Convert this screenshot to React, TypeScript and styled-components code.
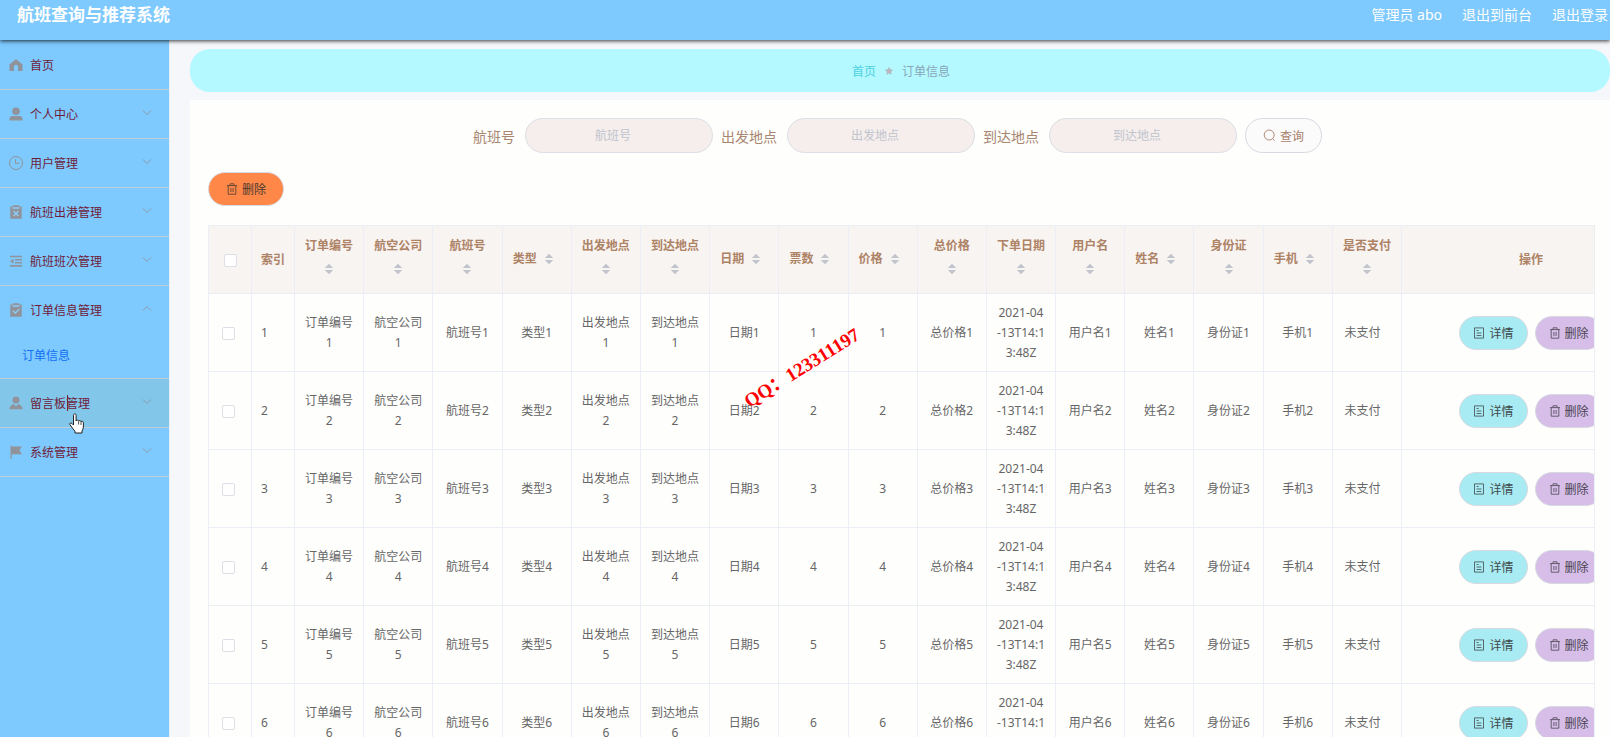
import React from "react";
import styled, { createGlobalStyle, css } from "styled-components";

const GlobalStyle = createGlobalStyle`
  * { box-sizing: border-box; }
  body {
    margin: 0;
    background: #f5f7fa;
    font-family: "Noto Sans", "Noto Sans CJK SC", sans-serif;
    font-size: 12px;
    color: #666;
  }
  button, input { font-family: inherit; }
  a { color: inherit; text-decoration: none; }
`;

const Shell = styled.div`
  position: relative;
  display: flex;
  flex-direction: column;
  height: 100vh;
  overflow: hidden;
`;

const TopBar = styled.header`
  position: relative;
  z-index: 2;
  flex: none;
  display: flex;
  align-items: center;
  justify-content: space-between;
  height: 40px;
  padding: 0 2px 11px 17px;
  background: #7ec9fd;
  color: #fff;
  box-shadow: 0 1px 4px rgba(0, 0, 0, 0.8);
`;

const Title = styled.h1`
  margin: 0;
  font-size: 17px;
  line-height: 28px;
  font-weight: 700;
`;

const TopLinks = styled.nav`
  display: flex;
  gap: 20px;
  font-size: 14px;
  line-height: 28px;
`;

const Body = styled.div`
  flex: 1;
  display: flex;
  min-height: 0;
`;

const Sidebar = styled.aside`
  flex: none;
  width: 170px;
  background: #7ec9fd;
  border-right: 1px solid #e6eef5;
`;

const Menu = styled.ul`
  margin: 0;
  padding: 1px 0 0;
  list-style: none;
`;

const MenuGroup = styled.li<{ $hover?: boolean }>`
  border-bottom: 1px solid #c0cdd6;
  background: ${(p) => (p.$hover ? "#82c7ea" : "transparent")};
`;

const MenuLink = styled.a`
  display: flex;
  align-items: center;
  height: 48px;
  padding: 0 17px 0 8px;
  color: #6e1c3a;
`;

const MenuText = styled.span`
  flex: 1;
  padding-left: 6px;
`;

const SubLink = styled.a`
  display: block;
  height: 44px;
  padding-left: 22px;
  line-height: 44px;
  color: #1270f5;
`;

const Main = styled.main`
  flex: 1;
  min-width: 0;
  padding: 9px 0 0 20px;
`;

const Breadcrumb = styled.nav`
  display: flex;
  align-items: center;
  justify-content: center;
  gap: 9px;
  height: 43px;
  padding-left: 2px;
  border-radius: 20px;
  background: #b3f9ff;
  color: #8aa5b8;
`;

const HomeLink = styled.a`
  color: #4cd0e0;
`;

const Panel = styled.section`
  margin-top: 8px;
  padding: 18px 15px 0 18px;
  background: #fefefd;
`;

const SearchForm = styled.form`
  display: flex;
  justify-content: center;
  gap: 8px;
  padding-right: 8px;
`;

const Field = styled.label`
  display: flex;
  align-items: center;
  gap: 10px;
  font-size: 14px;
  color: #a8866f;
`;

const TextBox = styled.input`
  width: 188px;
  height: 35px;
  padding: 0 27px 0 15px;
  border: 1px solid #dcdfe6;
  border-radius: 18px;
  background: #f5eeec;
  font-size: 12px;
  text-align: center;
  outline: none;
  &::placeholder { color: #c0c4cc; }
`;

type Tone = "plain" | "orange" | "cyan" | "purple";
const tones = {
  plain: css`background: #fcfbfb; color: #a8806a; padding: 0 17px;`,
  orange: css`background: #ff8849; color: #4a3a30; padding: 0 17px;`,
  cyan: css`background: #a8ebf2; color: #3f4a4d; padding: 0 13px;`,
  purple: css`background: #d6bee8; color: #4a4450; padding: 0 13px;`,
};

const PillButton = styled.button<{ $tone: Tone }>`
  display: inline-flex;
  align-items: center;
  gap: 4px;
  height: ${(p) => (p.$tone === "plain" ? 35 : 34)}px;
  border: 1px solid #d8dae2;
  border-radius: 18px;
  font-size: 12px;
  white-space: nowrap;
  cursor: pointer;
  ${(p) => tones[p.$tone]}
`;

const Toolbar = styled.div`
  padding: 19px 0;
`;

const TableFrame = styled.div`
  overflow: hidden;
  border: 1px solid #ebeef5;
  border-bottom: 0;
`;

const Table = styled.table`
  width: 100%;
  min-width: 1452px;
  table-layout: fixed;
  border-collapse: separate;
  border-spacing: 0;
`;

const Col = styled.col<{ $w?: number }>`
  ${(p) => p.$w && `width: ${p.$w}px;`}
`;

const cell = css`
  border-right: 1px solid #ebeef5;
  border-bottom: 1px solid #ebeef5;
  padding: 0 9px;
  line-height: 20px;
`;

const HeadCell = styled.th<{ $left?: boolean }>`
  ${cell}
  height: 68px;
  background: #f8f4f2;
  color: #ad8265;
  font-weight: 700;
  text-align: ${(p) => (p.$left ? "left" : "center")};
`;

const SortLabel = styled.div`
  display: flex;
  flex-wrap: wrap;
  align-items: center;
  justify-content: center;
  padding-bottom: 1px;
`;

const CaretBox = styled.span`
  display: flex;
  align-items: center;
  justify-content: center;
  width: 24px;
  height: 26px;
`;

const DataCell = styled.td<{ $left?: boolean }>`
  ${cell}
  height: 78px;
  text-align: ${(p) => (p.$left ? "left" : "center")};
  word-break: break-all;
  white-space: pre-line;
`;

const PaidText = styled.span`
  padding-right: 9px;
`;

const Check = styled.input`
  appearance: none;
  display: inline-block;
  width: 13px;
  height: 13px;
  margin: 0;
  border: 1px solid #dcdfe6;
  border-radius: 2px;
  background: #fff;
  vertical-align: middle;
  td & { margin-right: 4px; }
`;

const Actions = styled.div`
  display: flex;
  justify-content: center;
  gap: 7px;
`;

const Watermark = styled.div`
  position: absolute;
  z-index: 3;
  left: 736px;
  top: 356px;
  font-family: "Liberation Serif", "Noto Sans CJK SC", serif;
  font-size: 19px;
  line-height: 24px;
  font-weight: 700;
  color: #f00;
  white-space: nowrap;
  transform: rotate(-32deg);
  pointer-events: none;
`;

const Pointer = styled.svg`
  position: absolute;
  z-index: 3;
  left: 69px;
  top: 413px;
`;

const TextCaret = styled.i`
  position: absolute;
  z-index: 3;
  left: 67px;
  top: 395px;
  width: 1px;
  height: 16px;
  background: #7a2030;
`;

const iconPaths: Record<string, React.ReactNode> = {
  home: <path fill="#909399" d="M8 2 1.5 7.4V14h4.4v-4.2a2.1 2.1 0 0 1 4.2 0V14h4.4V7.4z" />,
  user: (
    <g fill="#909399">
      <circle cx="8" cy="5.2" r="3.8" />
      <path d="M1.5 14.5v-1.6c0-2 1.4-3 3-3h7c1.6 0 3 1 3 3v1.6z" />
    </g>
  ),
  clock: (
    <g fill="none" stroke="#909399" strokeWidth="1">
      <circle cx="8" cy="8" r="6.5" />
      <path d="M7.5 4.300v4h4" />
    </g>
  ),
  clipX: (
    <g>
      <path fill="#909399" d="M2.300 2.500h2.500V1.300h6.400v1.200h2.500v12.200H2.300z" />
      <path stroke="#8fd0fb" strokeWidth="1.3" fill="none" d="M4.500 4h7M5.500 7l5 5m0-5-5 5" />
    </g>
  ),
  list: (
    <g>
      <path stroke="#909399" fill="none" strokeWidth="1.6" d="M2 3.500h12M7 6.700h7M7 9.700h7M2 12.900h12" />
      <path fill="#909399" d="M5.500 5.700v5L2 8.200z" />
    </g>
  ),
  clipOk: (
    <g>
      <path fill="#909399" d="M2.300 2.500h2.500V1.300h6.400v1.200h2.500v12.200H2.300z" />
      <path stroke="#8fd0fb" strokeWidth="1.3" fill="none" d="M4.500 4h7M5 8.800l2.300 2.300 3.900-4" />
    </g>
  ),
  person: (
    <g fill="#909399">
      <circle cx="8" cy="5" r="3.5" />
      <path d="M1.5 14.300c0-2.800 1.700-4.500 4.200-5L8 11.200l2.300-1.900c2.500.5 4.200 2.200 4.200 5z" />
    </g>
  ),
  flag: <path fill="#909399" d="M2.500 1.500h1.200v1h10.300l-2.600 3.800 2.600 3.900H3.700v4.500H2.500z" />,
};

const MenuIcon = ({ name }: { name: string }) => (
  <svg width="16" height="16" viewBox="0 0 16 16" aria-hidden="true">{iconPaths[name]}</svg>
);

const Chevron = ({ up }: { up?: boolean }) => (
  <svg width="10" height="14" viewBox="0 0 10 14" aria-hidden="true">
    <path d={up ? "M1 7.500 5 3.500l4 4" : "M1 3.500l4 4 4-4"} fill="none" stroke="#909399" strokeWidth="0.9" />
  </svg>
);

const TrashIcon = () => (
  <svg width="12" height="12" viewBox="0 0 12 12" fill="none" stroke="currentColor" strokeWidth="0.8" aria-hidden="true">
    <path d="M1 2.600h10M4 2.400V.8h4v1.600M2.200 2.800v8.400h7.600V2.800M4.900 5v4M7.100 5v4" />
  </svg>
);

const DocIcon = () => (
  <svg width="12" height="12" viewBox="0 0 12 12" fill="none" stroke="currentColor" strokeWidth="0.8" aria-hidden="true">
    <path d="M1.500.9h9v10.200h-9zM3.600 3.500h2M3.600 6h4.800M3.600 8.500h4.800" />
  </svg>
);

const SearchIcon = () => (
  <svg width="13" height="13" viewBox="0 0 13 13" fill="none" stroke="currentColor" strokeWidth="0.9" aria-hidden="true">
    <circle cx="6.2" cy="6" r="5" />
    <path d="m9.600 9.600 2 2" />
  </svg>
);

const StarIcon = () => (
  <svg width="8" height="8" viewBox="0 0 10 10" aria-hidden="true">
    <path fill="#c0b4bc" stroke="#a9a9b4" strokeWidth="0.6" d="m5 .5 1.300 3 3.200.3-2.400 2.100.7 3.200L5 7.400 2.200 9.100l.7-3.200L.5 3.800l3.200-.3z" />
  </svg>
);

const SortCaret = () => (
  <CaretBox>
    <svg width="10" height="12" viewBox="0 0 10 12" fill="#c0c4cc" aria-hidden="true">
      <path d="M5 .8 9.200 5H.8zM5 11.200.8 7h8.400z" />
    </svg>
  </CaretBox>
);

const menu = [
  { text: "首页", icon: "home", leaf: true },
  { text: "个人中心", icon: "user" },
  { text: "用户管理", icon: "clock" },
  { text: "航班出港管理", icon: "clipX" },
  { text: "航班班次管理", icon: "list" },
  { text: "订单信息管理", icon: "clipOk", sub: "订单信息" },
  { text: "留言板管理", icon: "person", hover: true },
  { text: "系统管理", icon: "flag" },
];

const columns = ["订单编号", "航空公司", "航班号", "类型", "出发地点", "到达地点", "日期", "票数", "价格", "总价格", "下单日期", "用户名", "姓名", "身份证", "手机", "是否支付"];

const cellText = (name: string, n: number) => {
  if (name === "票数" || name === "价格") return String(n);
  if (name === "下单日期") return "2021-04\n-13T14:13:48Z";
  return name + n;
};

export default function App() {
  return (
    <Shell>
      <GlobalStyle />
      <TopBar>
        <Title>航班查询与推荐系统</Title>
        <TopLinks>
          <span>管理员 abo</span>
          <a href="#front">退出到前台</a>
          <a href="#logout">退出登录</a>
        </TopLinks>
      </TopBar>
      <Body>
        <Sidebar>
          <Menu>
            {menu.map((m) => (
              <MenuGroup key={m.text} $hover={m.hover}>
                <MenuLink href="#menu">
                  <MenuIcon name={m.icon} />
                  <MenuText>{m.text}</MenuText>
                  {!m.leaf && <Chevron up={!!m.sub} />}
                </MenuLink>
                {m.sub && <SubLink href="#orders">{m.sub}</SubLink>}
              </MenuGroup>
            ))}
          </Menu>
        </Sidebar>
        <Main>
          <Breadcrumb>
            <HomeLink href="#home">首页</HomeLink>
            <StarIcon />
            <span>订单信息</span>
          </Breadcrumb>
          <Panel>
            <SearchForm>
              {["航班号", "出发地点", "到达地点"].map((name) => (
                <Field key={name}>
                  {name}
                  <TextBox type="text" placeholder={name} />
                </Field>
              ))}
              <PillButton type="button" $tone="plain"><SearchIcon />查询</PillButton>
            </SearchForm>
            <Toolbar>
              <PillButton type="button" $tone="orange"><TrashIcon />删除</PillButton>
            </Toolbar>
            <TableFrame>
              <Table>
                <colgroup>
                  <Col $w={43} />
                  <Col $w={43} />
                  {columns.map((c) => <Col key={c} />)}
                  <Col $w={259} />
                </colgroup>
                <thead>
                  <tr>
                    <HeadCell><Check type="checkbox" aria-label="全选" /></HeadCell>
                    <HeadCell $left>索引</HeadCell>
                    {columns.map((c) => (
                      <HeadCell key={c}><SortLabel>{c}<SortCaret /></SortLabel></HeadCell>
                    ))}
                    <HeadCell>操作</HeadCell>
                  </tr>
                </thead>
                <tbody>
                  {[1, 2, 3, 4, 5, 6].map((n) => (
                    <tr key={n}>
                      <DataCell><Check type="checkbox" aria-label={`选择 ${n}`} /></DataCell>
                      <DataCell $left>{n}</DataCell>
                      {columns.map((c) => (
                        <DataCell key={c}>
                          {c === "是否支付" ? <PaidText>未支付</PaidText> : cellText(c, n)}
                        </DataCell>
                      ))}
                      <DataCell>
                        <Actions>
                          <PillButton type="button" $tone="cyan"><DocIcon />详情</PillButton>
                          <PillButton type="button" $tone="purple"><TrashIcon />删除</PillButton>
                        </Actions>
                      </DataCell>
                    </tr>
                  ))}
                </tbody>
              </Table>
            </TableFrame>
          </Panel>
        </Main>
      </Body>
      <Watermark>QQ：123311197</Watermark>
      <TextCaret />
      <Pointer width="17" height="21" viewBox="0 0 17 21" aria-hidden="true">
        <path fill="#fff" stroke="#222" strokeWidth="1" strokeLinejoin="round" d="M4.500 12V2.300c0-2 2.600-2 2.600 0V8c.3-1.300 2.400-1.200 2.500.3.400-1.100 2.300-1 2.400.5.500-.9 2.400-.7 2.400 1v4.200c0 1.500-.9 2.800-1.400 4v2H6v-1.700C4.300 16.300 2.500 14 1 11.700c-.8-1.500 1.100-2.300 2-1.200z" />
        <path stroke="#222" strokeWidth="0.8" d="M9.600 8.500v3M12 9v3" />
      </Pointer>
    </Shell>
  );
}
